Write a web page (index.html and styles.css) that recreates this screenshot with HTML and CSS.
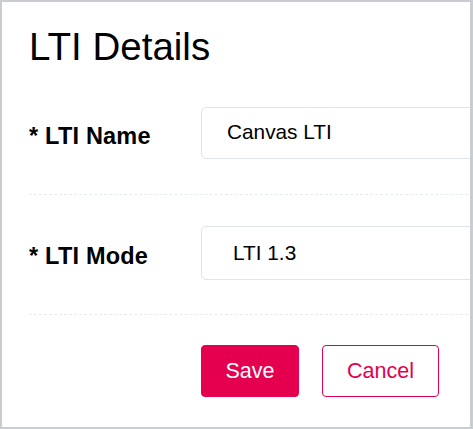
FILE: index.html
```
<!DOCTYPE html>
<html>
<head>
<meta charset="utf-8">
<link rel="stylesheet" href="styles.css">
</head>
<body>
<div class="card">
  <h1 class="title">LTI Details</h1>
  <div class="row">
    <label class="label">* LTI Name</label>
    <div class="field field-input">Canvas LTI</div>
  </div>
  <div class="row">
    <label class="label">* LTI Mode</label>
    <div class="field field-select">LTI 1.3</div>
  </div>
  <div class="actions">
    <button class="btn btn-primary">Save</button>
    <button class="btn btn-outline">Cancel</button>
  </div>
</div>
</body>
</html>
```
FILE: styles.css
```
html, body {
  margin: 0;
  padding: 0;
}
body {
  background: #c9cdd1;
  width: 473px;
  height: 429px;
  overflow: hidden;
  font-family: "Liberation Sans", Arial, sans-serif;
  color: #000;
}
.card {
  margin: 2px 3px 2px 2px;
  width: 468px;
  height: 425px;
  background: #fff;
  box-sizing: border-box;
  padding: 23px 0 0 27px;
  overflow: hidden;
}
.title {
  margin: 0 0 7px 0;
  font-size: 38.5px;
  line-height: 44px;
  font-weight: normal;
}
.row {
  display: flex;
  align-items: center;
  padding: 31px 0 35px 0;
  border-bottom: 1px dashed #e8ebee;
  width: 600px;
}
.row + .row {
  padding-bottom: 34px;
}
.label {
  width: 172px;
  flex: none;
  font-size: 23.5px;
  font-weight: bold;
  letter-spacing: 0.2px;
  padding-top: 6px;
}
.field {
  width: 340px;
  box-sizing: border-box;
  border: 1px solid #dfe4e8;
  border-radius: 5px;
  font-size: 20.8px;
  display: flex;
  align-items: center;
}
.field-input {
  height: 52px;
  padding-left: 25px;
  padding-bottom: 2px;
}
.field-select {
  height: 54px;
  padding-left: 31px;
}
.actions {
  display: flex;
  gap: 23px;
  padding: 30px 0 0 172px;
}
.btn {
  height: 52px;
  box-sizing: border-box;
  border-radius: 4px;
  font-family: "Liberation Sans", Arial, sans-serif;
  font-size: 21.5px;
  padding: 0;
  cursor: pointer;
}
.btn-primary {
  width: 98px;
  background: #e4004f;
  border: 1px solid #e4004f;
  color: #fff;
}
.btn-outline {
  width: 117px;
  background: #fff;
  border: 1px solid #e4004f;
  color: #e4004f;
}
```
